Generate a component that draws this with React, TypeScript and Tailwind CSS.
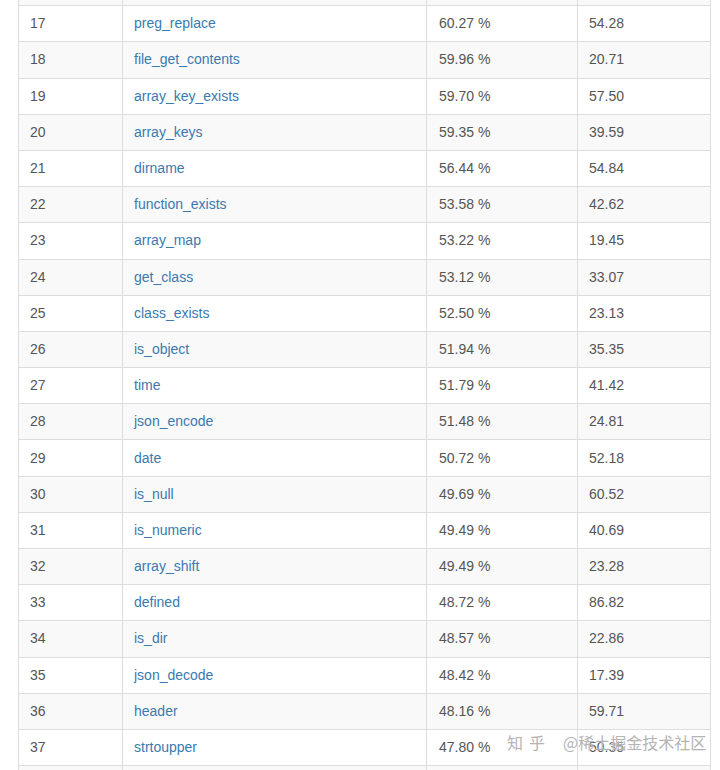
import React from 'react';

const ROWS: [number, string, string, string][] = [
  [16, '', '', ''],
  [17, 'preg_replace', '60.27 %', '54.28'],
  [18, 'file_get_contents', '59.96 %', '20.71'],
  [19, 'array_key_exists', '59.70 %', '57.50'],
  [20, 'array_keys', '59.35 %', '39.59'],
  [21, 'dirname', '56.44 %', '54.84'],
  [22, 'function_exists', '53.58 %', '42.62'],
  [23, 'array_map', '53.22 %', '19.45'],
  [24, 'get_class', '53.12 %', '33.07'],
  [25, 'class_exists', '52.50 %', '23.13'],
  [26, 'is_object', '51.94 %', '35.35'],
  [27, 'time', '51.79 %', '41.42'],
  [28, 'json_encode', '51.48 %', '24.81'],
  [29, 'date', '50.72 %', '52.18'],
  [30, 'is_null', '49.69 %', '60.52'],
  [31, 'is_numeric', '49.49 %', '40.69'],
  [32, 'array_shift', '49.49 %', '23.28'],
  [33, 'defined', '48.72 %', '86.82'],
  [34, 'is_dir', '48.57 %', '22.86'],
  [35, 'json_decode', '48.42 %', '17.39'],
  [36, 'header', '48.16 %', '59.71'],
  [37, 'strtoupper', '47.80 %', '50.35'],
  [38, '', '', ''],
];

export default function App() {
  return (
    <div className="relative h-[770px] w-[720px] overflow-hidden bg-white font-['Liberation_Sans',Arial,sans-serif] text-[14px]">
      <div className="ml-[18px] mt-[-31px] w-[693px] border-r border-[#dddddd]">
        {ROWS.map(([n, name, pct, val]) => (
          <div
            key={n}
            className={`grid h-[36.2px] grid-cols-[104px_304px_151px_134px] items-center border-t border-[#dddddd] ${
              n % 2 === 0 ? 'bg-[#f9f9f9]' : 'bg-white'
            }`}
          >
            <div className="flex h-full items-center border-l border-[#dddddd] pl-[11px] text-[#555555]">{n < 38 && n > 16 ? n : ''}</div>
            <div className="flex h-full items-center border-l border-[#dddddd] pl-[11px] text-[#3a7ab0]">{name}</div>
            <div className="flex h-full items-center border-l border-[#dddddd] pl-[12px] text-[#555555]">{pct}</div>
            <div className="flex h-full items-center border-l border-[#dddddd] pl-[11px] text-[#555555]">{val}</div>
          </div>
        ))}
      </div>
      <div className="absolute left-[507px] top-[731px] flex items-center gap-[12px] whitespace-nowrap font-['Noto_Sans_CJK_SC',sans-serif] text-[16px] leading-[22px] text-[#b4b4b4] [text-shadow:0_0_2px_rgba(255,255,255,0.9)]">
        <span className="tracking-[6px]">知乎</span>
        <span>@稀土掘金技术社区</span>
      </div>
    </div>
  );
}
